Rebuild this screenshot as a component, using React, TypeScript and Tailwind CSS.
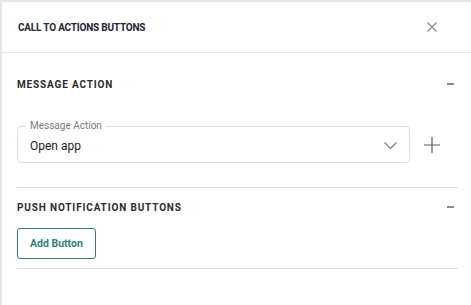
import { useState } from "react";

function SectionHeader({ title }: { title: string }) {
  return (
    <div className="flex h-5 items-center justify-between">
      <h3 className="text-[10px] font-bold uppercase tracking-[0.85px] text-[#2b2b2b]">
        {title}
      </h3>
      <button className="mr-[4px] flex h-4 w-4 items-center justify-end">
        <span className="block h-[2px] w-[7px] bg-[#8a8a8a]" />
      </button>
    </div>
  );
}

export default function App() {
  const [action] = useState("Open app");

  return (
    <div className="h-[305px] w-[471px] border-l-2 border-t-2 border-[#e4e6ea] bg-white font-['Roboto',sans-serif]">
      {/* header */}
      <div className="flex h-[51px] items-center justify-between border-b border-[#e4e6ea] pl-[16px] pr-[34px]">
        <h2 className="text-[10px] font-bold tracking-[-0.2px] text-[#1f2533]">
          CALL TO ACTIONS BUTTONS
        </h2>
        <button className="text-[#8a8a8a]">
          <svg width="10" height="10" viewBox="0 0 10 10" stroke="currentColor" strokeWidth="1.1">
            <path d="M0.5 0.5 L9.5 9.5 M9.5 0.5 L0.5 9.5" />
          </svg>
        </button>
      </div>

      <div className="pl-[15px] pr-[13px] pt-[21px]">
        <SectionHeader title="Message Action" />

        <div className="mt-[32px] flex items-center gap-[14px]">
          <div className="relative flex h-[37px] w-[393px] items-center justify-between rounded-[4px] border border-[#dcdcdc] pl-[12px] pr-[12px] pt-[2px]">
            <span className="absolute -top-[7px] left-[8px] bg-white px-[4px] text-[10px] leading-[12px] text-[#7a7a7a]">
              Message Action
            </span>
            <span className="text-[12px] text-[#222]">{action}</span>
            <svg width="13" height="7" viewBox="0 0 13 7" fill="none" stroke="#7a7a7a" strokeWidth="1.1">
              <path d="M0.5 0.5 L6.5 6.5 L12.5 0.5" />
            </svg>
          </div>
          <button className="text-[#5a5a5a]">
            <svg width="16" height="16" viewBox="0 0 16 16" stroke="currentColor" strokeWidth="1.2">
              <path d="M8 0 V16 M0 8 H16" />
            </svg>
          </button>
        </div>

        <div className="mt-[24px] border-t border-[#dedede]" />

        <div className="mt-[9px]">
          <SectionHeader title="Push Notification Buttons" />
        </div>

        <button className="mt-[11px] h-[31px] rounded-[3px] border border-[#2f7f72] px-[12px] text-[10.5px] font-bold text-[#2f7f72]">
          Add Button
        </button>

        <div className="mt-[9px] border-t border-[#dedede]" />
      </div>
    </div>
  );
}
